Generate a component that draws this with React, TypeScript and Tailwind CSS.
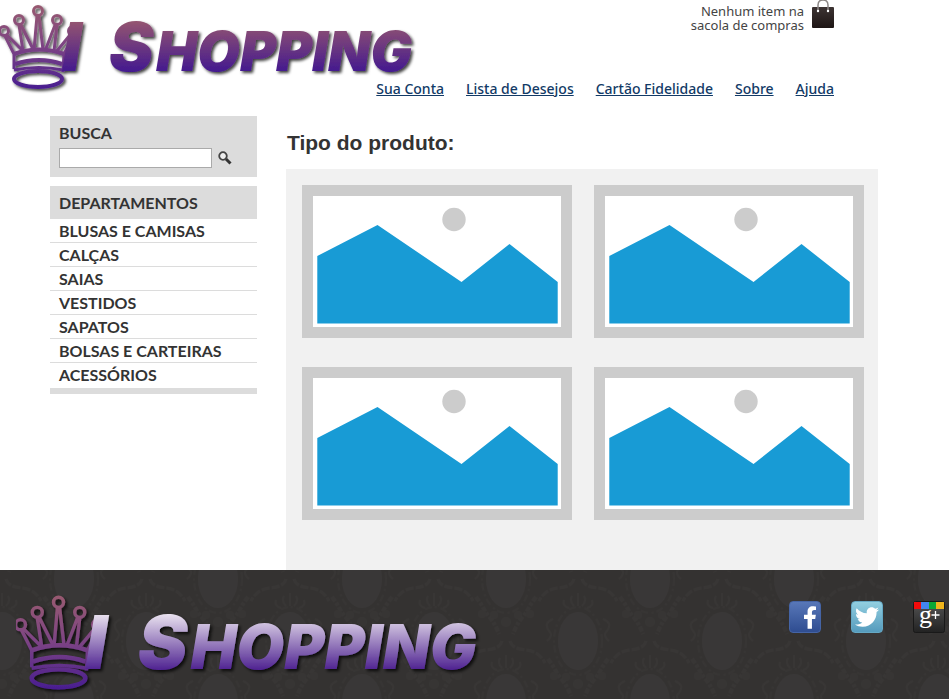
import React from "react";
import { FaFacebookF, FaTwitter } from "react-icons/fa";

const navLinks = ["Sua Conta", "Lista de Desejos", "Cartão Fidelidade", "Sobre", "Ajuda"];

const departments = [
  "BLUSAS E CAMISAS",
  "CALÇAS",
  "SAIAS",
  "VESTIDOS",
  "SAPATOS",
  "BOLSAS E CARTEIRAS",
  "ACESSÓRIOS",
];

type LogoProps = { id: string; letterTop: string; letterBottom: string; width: number };

function Logo({ id, letterTop, letterBottom, width }: LogoProps) {
  const ink = `url(#${id}-letters)`;
  return (
    <svg width={width} viewBox="0 0 424 94" role="img" aria-label="I Shopping" className="block shrink-0">
      <defs>
        <linearGradient id={`${id}-letters`} gradientUnits="userSpaceOnUse" x1="0" y1="22" x2="0" y2="72">
          <stop offset="0" stopColor={letterTop} />
          <stop offset="1" stopColor={letterBottom} />
        </linearGradient>
        <linearGradient id={`${id}-crown`} gradientUnits="userSpaceOnUse" x1="0" y1="5" x2="0" y2="88">
          <stop offset="0" stopColor="#985a70" />
          <stop offset="0.5" stopColor="#7c4384" />
          <stop offset="1" stopColor="#4a1e90" />
        </linearGradient>
        <filter id={`${id}-shadow`} x="-5%" y="-10%" width="110%" height="125%">
          <feDropShadow dx="2" dy="2" stdDeviation="1.5" floodColor="#000" floodOpacity="0.75" />
        </filter>
      </defs>
      <g filter={`url(#${id}-shadow)`}>
        <g fill="none" stroke={`url(#${id}-crown)`} strokeWidth="3" strokeLinejoin="round">
          <circle cx="4" cy="31" r="4.500" />
          <circle cx="19" cy="20" r="4.500" />
          <circle cx="38" cy="11" r="4.500" />
          <circle cx="57" cy="20" r="4.500" />
          <circle cx="73" cy="31" r="4.500" />
          <path d="M5 36L14 54L14 69M7 35L22 50M19 25L23 51M21 25L33 49M37 16L34 50M39 16L43 50M55 25L45 51M57 25L54 51M70 35L56 52M73 36L64 54L63 72" />
          <path d="M14 54Q39 45 64 54M15 64Q39 56 62 64" strokeWidth="4" />
          <path d="M14 70Q39 65 63 70" />
          <ellipse cx="38" cy="79" rx="24" ry="8" strokeWidth="4" />
        </g>
        <g fill={ink} className="font-['Inter','Liberation_Sans',sans-serif] font-black italic">
          <text x="62" y="71" fontSize="67">I</text>
          <text x="109" y="71" fontSize="67">S</text>
          <text x="156" y="71" fontSize="55">HOPPING</text>
        </g>
      </g>
    </svg>
  );
}

function BagIcon() {
  return (
    <svg width="22" height="28" viewBox="0 0 22 28" aria-hidden="true" className="block">
      <defs>
        <linearGradient id="bag" x1="0" y1="0" x2="0" y2="1">
          <stop offset="0" stopColor="#3d3433" />
          <stop offset="1" stopColor="#1d1514" />
        </linearGradient>
      </defs>
      <rect y="7" width="22" height="21" rx="1" fill="url(#bag)" />
      <path d="M6 11V5Q6 0 11 0Q16 0 16 5V11" fill="none" stroke="#8c8785" strokeWidth="1.500" />
      <circle cx="6" cy="11" r="1.200" fill="#fff" />
      <circle cx="16" cy="11" r="1.200" fill="#fff" />
    </svg>
  );
}

function Placeholder() {
  return (
    <svg viewBox="0 0 270 153" role="img" aria-label="Produto" className="block h-auto w-full">
      <rect width="270" height="153" fill="#ccc" />
      <rect x="11" y="11" width="248" height="131" fill="#fff" />
      <circle cx="152" cy="34.500" r="11.700" fill="#ccc" />
      <path d="M15.300 71L75.500 40L159.500 97L207.500 59L255.700 97V138.500H15.300Z" fill="#189bd5" />
    </svg>
  );
}

function Damask() {
  return (
    <svg className="absolute inset-0 h-full w-full" aria-hidden="true">
      <defs>
        <g id="medallion">
          <ellipse rx="20" ry="29" fill="#393737" />
          <ellipse rx="24" ry="34" fill="none" stroke="#373534" strokeWidth="2" strokeDasharray="7 3 2 4" />
          <g fill="none" stroke="#383635" strokeWidth="2">
            <path d="M0 -35V-48M-4 -35Q-9 -40 -6 -45M4 -35Q9 -40 6 -45M-9 -33Q-16 -35 -14 -41M9 -33Q16 -35 14 -41" />
            <path d="M-25 -22Q-35 -18 -29 -10Q-24 -6 -31 0M25 -22Q35 -18 29 -10Q24 -6 31 0" />
            <path d="M-30 18Q-24 26 -20 34Q-12 42 -7 55M30 18Q24 26 20 34Q12 42 7 55" strokeWidth="4" strokeDasharray="5 2 3 2" />
            <path d="M-4 62Q-6 70 -20 71Q-33 72 -39 84M4 62Q6 70 20 71Q33 72 39 84" strokeWidth="3" strokeDasharray="8 2" />
          </g>
          <g fill="#373534">
            <circle cx="-24" cy="35" r="4" />
            <circle cx="24" cy="35" r="4" />
            <circle cx="-12" cy="36" r="4" />
            <circle cx="12" cy="36" r="4" />
            <circle cx="0" cy="43" r="5" />
          </g>
        </g>
        <pattern id="damask" width="144" height="124" patternUnits="userSpaceOnUse">
          <use href="#medallion" x="2" y="71" />
          <use href="#medallion" x="146" y="71" />
          <use href="#medallion" x="2" y="-53" />
          <use href="#medallion" x="146" y="-53" />
          <use href="#medallion" x="74" y="9" />
          <use href="#medallion" x="74" y="133" />
        </pattern>
      </defs>
      <rect width="100%" height="100%" fill="url(#damask)" />
    </svg>
  );
}

function GooglePlus() {
  return (
    <svg width="32" height="32" viewBox="0 0 32 32" aria-hidden="true" className="block">
      <defs>
        <linearGradient id="gp" x1="0" y1="0" x2="0" y2="1">
          <stop offset="0" stopColor="#555" />
          <stop offset="1" stopColor="#222" />
        </linearGradient>
      </defs>
      <rect x="0.500" y="0.500" width="31" height="31" rx="2" fill="url(#gp)" stroke="#191919" />
      <rect x="1" y="1" width="7" height="7" fill="#f30b0b" />
      <rect x="8" y="1" width="8" height="7" fill="#4285f0" />
      <rect x="16" y="1" width="7" height="7" fill="#0ca735" />
      <rect x="23" y="1" width="8" height="7" fill="#f0b51c" />
      <text x="6" y="22" fontSize="26" fill="#fff" className="font-['Liberation_Serif',serif]">g</text>
      <path d="M22.500 10V18M18.500 14H26.500" stroke="#fff" strokeWidth="1.300" />
    </svg>
  );
}

export default function App() {
  return (
    <div className="flex min-h-screen flex-col bg-white font-['Noto_Sans',sans-serif] text-[#333]">
      <header className="flex h-[116px] items-start">
        <Logo id="top" letterTop="#935471" letterBottom="#43198f" width={424} />
        <div className="-ml-12 flex w-[458px] flex-col items-end gap-[47px]">
          <div className="flex items-start gap-2">
            <p className="pt-1 text-right text-[13px] leading-[14px] text-[#444]">
              Nenhum item na
              <br />
              sacola de compras
            </p>
            <BagIcon />
          </div>
          <nav className="flex gap-[22px] text-sm leading-5 font-medium whitespace-nowrap text-[#123a66]">
            {navLinks.map((label) => (
              <a key={label} href="#" className="underline">
                {label}
              </a>
            ))}
          </nav>
        </div>
      </header>

      <div className="flex grow items-stretch gap-[29px] pl-[50px]">
        <aside className="w-[207px] shrink-0 font-['Lato','Noto_Sans',sans-serif] text-base font-bold">
          <form className="h-[61px] bg-[#dcdcdc] px-[9px] pt-[7px]" onSubmit={(e) => e.preventDefault()}>
            <label htmlFor="busca" className="block leading-5">
              BUSCA
            </label>
            <div className="mt-[5px] flex items-center gap-1.5">
              <input
                id="busca"
                type="text"
                className="h-5 w-[153px] border border-[#aaa] bg-white px-1 text-xs font-normal outline-none"
              />
              <button type="submit" aria-label="Buscar">
                <svg width="14" height="14" viewBox="0 0 14 14" className="block">
                  <circle cx="5" cy="5" r="3.800" fill="#eee" stroke="#444" strokeWidth="1.800" />
                  <path d="M8 8L12.500 12.500" stroke="#333" strokeWidth="3" />
                </svg>
              </button>
            </div>
          </form>
          <section className="mt-[9px] border-b-[6px] border-[#dcdcdc]">
            <h2 className="bg-[#dcdcdc] px-[9px] pt-[7px] pb-1.5 leading-5">DEPARTAMENTOS</h2>
            <ul className="divide-y divide-[#dcdcdc] pb-0.5">
              {departments.map((name) => (
                <li key={name}>
                  <a href="#" className="block px-[9px] leading-[23px]">
                    {name}
                  </a>
                </li>
              ))}
            </ul>
          </section>
        </aside>

        <main className="flex max-w-[592px] grow flex-col">
          <h1 className="pt-3 pb-3 pl-px font-['Liberation_Sans',Arial,sans-serif] text-[21px] leading-[29px] font-bold">
            Tipo do produto:
          </h1>
          <div className="grid grow grid-cols-2 content-start gap-x-[22px] gap-y-[29px] bg-[#f1f1f1] pt-4 pr-[14px] pb-[50px] pl-4">
            {[0, 1, 2, 3].map((n) => (
              <a key={n} href="#">
                <Placeholder />
              </a>
            ))}
          </div>
        </main>
      </div>

      <footer className="relative flex h-[129px] items-start justify-between overflow-hidden bg-[#343231] pt-5 pr-1">
        <Damask />
        <div className="relative pl-4">
          <Logo id="bottom" letterTop="#e8e0ee" letterBottom="#4d2190" width={474} />
        </div>
        <div className="relative flex gap-[30px] pt-[11px]">
          <a
            href="#"
            aria-label="Facebook"
            className="flex size-8 items-end justify-end rounded-sm border border-[#4564a5] bg-linear-to-b from-[#5877b8] to-[#2f4d91] pr-[3px] pb-[3px] text-white"
          >
            <FaFacebookF className="h-[23px] w-[14px]" />
          </a>
          <a
            href="#"
            aria-label="Twitter"
            className="flex size-8 items-center justify-center rounded-sm border border-[#65a8c4] bg-linear-to-b from-[#92cfe0] to-[#559bbd] text-white"
          >
            <FaTwitter size={24} />
          </a>
          <a href="#" aria-label="Google+">
            <GooglePlus />
          </a>
        </div>
      </footer>
    </div>
  );
}
